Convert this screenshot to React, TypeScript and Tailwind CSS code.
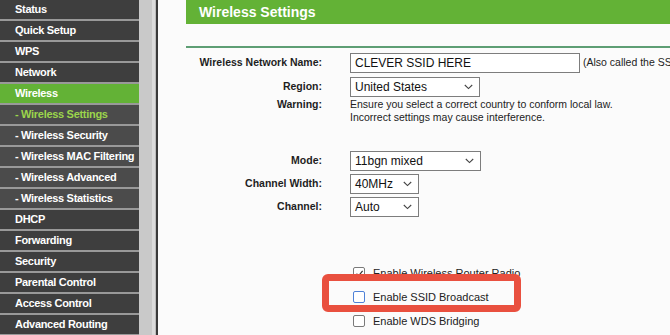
import React from "react";

const font = { fontFamily: '"Liberation Sans", Arial, sans-serif' };

type Item = { label: string; sub?: boolean; active?: boolean; activeSub?: boolean };

const items: Item[] = [
  { label: "Status" },
  { label: "Quick Setup" },
  { label: "WPS" },
  { label: "Network" },
  { label: "Wireless", active: true },
  { label: "- Wireless Settings", sub: true, activeSub: true },
  { label: "- Wireless Security", sub: true },
  { label: "- Wireless MAC Filtering", sub: true },
  { label: "- Wireless Advanced", sub: true },
  { label: "- Wireless Statistics", sub: true },
  { label: "DHCP" },
  { label: "Forwarding" },
  { label: "Security" },
  { label: "Parental Control" },
  { label: "Access Control" },
  { label: "Advanced Routing" },
];

function Chevron() {
  return (
    <svg width="9" height="6" viewBox="0 0 9 6" className="shrink-0">
      <path d="M0.8 1 L4.5 4.6 L8.2 1" fill="none" stroke="#444" strokeWidth="1.1" />
    </svg>
  );
}

function Select({ value, width }: { value: string; width: string }) {
  return (
    <div
      className={`${width} h-[20px] border border-[#7d7d7d] bg-white flex items-center justify-between pl-[4px] pr-[6px] text-[12px] text-[#111]`}
    >
      <span>{value}</span>
      <Chevron />
    </div>
  );
}

function Label({ children }: { children: React.ReactNode }) {
  return (
    <div className="w-[136px] shrink-0 text-right font-bold text-[10.5px] text-[#1e1e1e] pr-[0px]">
      {children}
    </div>
  );
}

function CheckRow({ label, checked, focus }: { label: string; checked?: boolean; focus?: boolean }) {
  return (
    <div className="flex items-center h-[24px] pl-[167px]">
      <div
        className={`w-[12px] h-[12px] rounded-[2px] bg-white border flex items-center justify-center ${
          focus ? "border-[#4f82d8]" : "border-[#7a7a7a]"
        }`}
      >
        {checked && (
          <svg width="9" height="9" viewBox="0 0 9 9">
            <path d="M1.5 4.8 L3.6 6.8 L7.6 1.8" fill="none" stroke="#333" strokeWidth="1.2" />
          </svg>
        )}
      </div>
      <span className="ml-[8px] text-[11px] text-[#222]">{label}</span>
    </div>
  );
}

export default function App() {
  return (
    <div className="w-[670px] h-[335px] overflow-hidden flex bg-[#fbfbfb] relative" style={font}>
      {/* Sidebar */}
      <div className="w-[139px] shrink-0 flex flex-col bg-[#9a9a9a]">
        {items.map((it) => (
          <div
            key={it.label}
            className={`h-[21px] shrink-0 border-b-2 border-[#999999] flex items-center pl-[15px] whitespace-nowrap font-bold text-[11px] tracking-[-0.3px] ${
              it.active ? "bg-[#63b236]" : it.sub ? "bg-[#4b4b4b]" : "bg-[#3e3e3e]"
            } ${it.activeSub ? "text-[#9bd54b]" : "text-white"}`}
          >
            {it.label}
          </div>
        ))}
      </div>
      {/* Gutter */}
      <div className="w-[13px] shrink-0 bg-[#c9c9c9]" />
      <div className="w-[3px] shrink-0 bg-[#dcdcdc]" />
      <div className="w-[1px] shrink-0 bg-[#bdbdbd]" />
      <div className="w-[2px] shrink-0 bg-[#3a3a3a]" />

      {/* Content */}
      <div className="flex-1 pl-[28px] flex flex-col min-w-0">
        <div className="h-[24px] bg-[#63b236] flex items-center pl-[13px] text-white font-bold text-[14px]">
          Wireless Settings
        </div>
        <div className="h-[22px]" />
        <div className="h-[2px] bg-[#5e9e74]" />

        <div className="mt-[5px] flex items-center h-[20px]">
          <Label>Wireless Network Name:</Label>
          <div className="ml-[28px] w-[230px] h-[20px] shrink-0 border border-[#7d7d7d] bg-white flex items-center pl-[4px] text-[12px] text-[#111]">
            CLEVER SSID HERE
          </div>
          <span className="ml-[3px] whitespace-nowrap text-[10.5px] text-[#222]">(Also called the SSID)</span>
        </div>

        <div className="mt-[4px] flex items-center h-[20px]">
          <Label>Region:</Label>
          <div className="ml-[28px]">
            <Select value="United States" width="w-[130px]" />
          </div>
        </div>

        <div className="mt-[1px] flex items-start">
          <div className="w-[136px] shrink-0 text-right font-bold text-[10.5px] leading-[13px] text-[#1e1e1e]">
            Warning:
          </div>
          <div className="ml-[28px] text-[10.5px] leading-[13px] text-[#222] whitespace-nowrap">
            <div>Ensure you select a correct country to conform local law.</div>
            <div>Incorrect settings may cause interference.</div>
          </div>
        </div>

        <div className="mt-[27px] flex items-center h-[20px]">
          <Label>Mode:</Label>
          <div className="ml-[28px]">
            <Select value="11bgn mixed" width="w-[131px]" />
          </div>
        </div>
        <div className="mt-[3px] flex items-center h-[20px]">
          <Label>Channel Width:</Label>
          <div className="ml-[28px]">
            <Select value="40MHz" width="w-[69px]" />
          </div>
        </div>
        <div className="mt-[3px] flex items-center h-[20px]">
          <Label>Channel:</Label>
          <div className="ml-[28px]">
            <Select value="Auto" width="w-[69px]" />
          </div>
        </div>

        <div className="mt-[44px] flex flex-col">
          <CheckRow label="Enable Wireless Router Radio" checked />
          <CheckRow label="Enable SSID Broadcast" focus />
          <CheckRow label="Enable WDS Bridging" />
        </div>
      </div>

      {/* Red highlight box */}
      <div className="absolute left-[322px] top-[274px] w-[199px] h-[38px] border-[7px] border-[#e9503f] rounded-[6px]" />
    </div>
  );
}
